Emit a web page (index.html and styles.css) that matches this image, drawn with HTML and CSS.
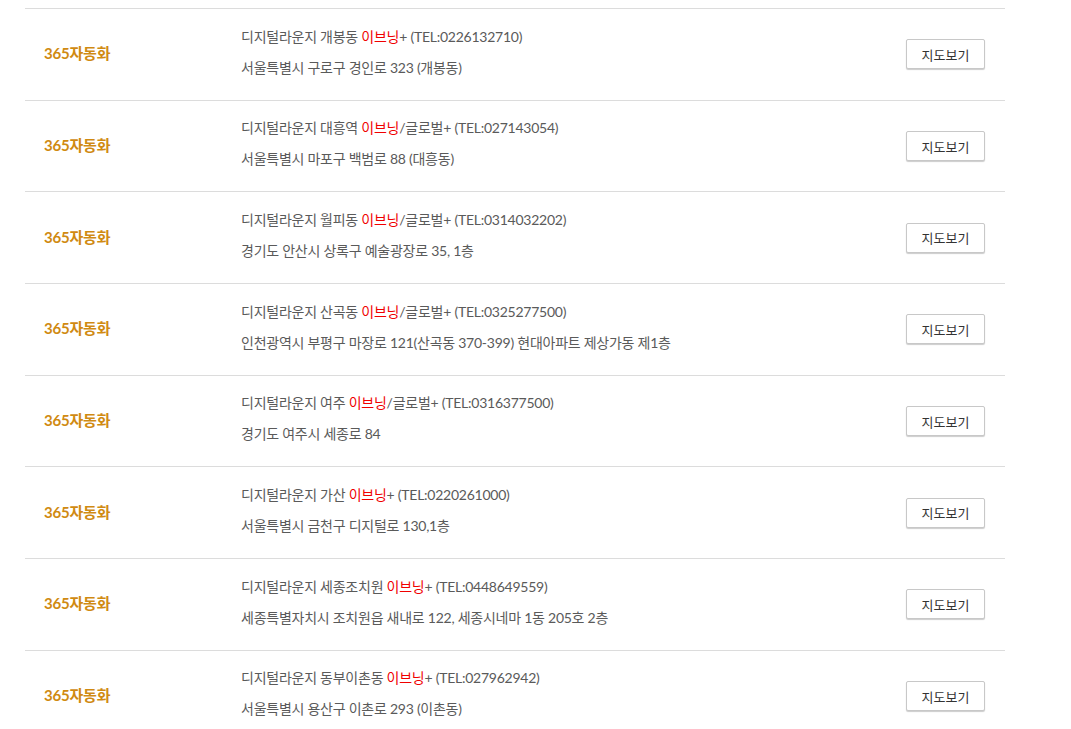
FILE: index.html
```html
<!DOCTYPE html>
<html lang="ko">
<head>
<meta charset="utf-8">
<link rel="stylesheet" href="styles.css">
</head>
<body>
<ul class="shop-list">
  <li class="shop">
    <div class="shop-name">365자동화</div>
    <div class="shop-info">
      <p class="line">디지털라운지 개봉동 <span class="brand">이브닝</span>+ (TEL:0226132710)</p>
      <p class="line">서울특별시 구로구 경인로 323 (개봉동)</p>
    </div>
    <button class="map-btn">지도보기</button>
  </li>
  <li class="shop">
    <div class="shop-name">365자동화</div>
    <div class="shop-info">
      <p class="line">디지털라운지 대흥역 <span class="brand">이브닝</span>/글로벌+ (TEL:027143054)</p>
      <p class="line">서울특별시 마포구 백범로 88 (대흥동)</p>
    </div>
    <button class="map-btn">지도보기</button>
  </li>
  <li class="shop">
    <div class="shop-name">365자동화</div>
    <div class="shop-info">
      <p class="line">디지털라운지 월피동 <span class="brand">이브닝</span>/글로벌+ (TEL:0314032202)</p>
      <p class="line">경기도 안산시 상록구 예술광장로 35, 1층</p>
    </div>
    <button class="map-btn">지도보기</button>
  </li>
  <li class="shop">
    <div class="shop-name">365자동화</div>
    <div class="shop-info">
      <p class="line">디지털라운지 산곡동 <span class="brand">이브닝</span>/글로벌+ (TEL:0325277500)</p>
      <p class="line">인천광역시 부평구 마장로 121(산곡동 370-399) 현대아파트 제상가동 제1층</p>
    </div>
    <button class="map-btn">지도보기</button>
  </li>
  <li class="shop">
    <div class="shop-name">365자동화</div>
    <div class="shop-info">
      <p class="line">디지털라운지 여주 <span class="brand">이브닝</span>/글로벌+ (TEL:0316377500)</p>
      <p class="line">경기도 여주시 세종로 84</p>
    </div>
    <button class="map-btn">지도보기</button>
  </li>
  <li class="shop">
    <div class="shop-name">365자동화</div>
    <div class="shop-info">
      <p class="line">디지털라운지 가산 <span class="brand">이브닝</span>+ (TEL:0220261000)</p>
      <p class="line">서울특별시 금천구 디지털로 130,1층</p>
    </div>
    <button class="map-btn">지도보기</button>
  </li>
  <li class="shop">
    <div class="shop-name">365자동화</div>
    <div class="shop-info">
      <p class="line">디지털라운지 세종조치원 <span class="brand">이브닝</span>+ (TEL:0448649559)</p>
      <p class="line">세종특별자치시 조치원읍 새내로 122, 세종시네마 1동 205호 2층</p>
    </div>
    <button class="map-btn">지도보기</button>
  </li>
  <li class="shop">
    <div class="shop-name">365자동화</div>
    <div class="shop-info">
      <p class="line">디지털라운지 동부이촌동 <span class="brand">이브닝</span>+ (TEL:027962942)</p>
      <p class="line">서울특별시 용산구 이촌로 293 (이촌동)</p>
    </div>
    <button class="map-btn">지도보기</button>
  </li>
</ul>
</body>
</html>
```

FILE: styles.css
```css
html, body {
  margin: 0;
  padding: 0;
  background: #fff;
}

body {
  font-family: Lato, "Noto Sans CJK KR", sans-serif;
  color: #555;
}

.shop-list {
  list-style: none;
  margin: 8px 0 0 25px;
  padding: 0;
  width: 980px;
}

.shop {
  display: flex;
  align-items: center;
  border-top: 1px solid #dcdcdc;
  padding: 0 20px 0 19px;
}

.shop-name {
  width: 197px;
  flex: none;
  font-size: 15px;
  font-weight: 700;
  color: #d08a12;
  letter-spacing: -0.2px;
  padding-bottom: 3px;
}

.shop-info {
  flex: 1;
  padding: 11.5px 0 17.2px;
}

.line {
  margin: 0;
  font-family: Lato, "Noto Sans CJK KR", sans-serif;
  font-size: 14px;
  letter-spacing: -0.25px;
  line-height: 31px;
  color: #5a5a5a;
  white-space: nowrap;
}

.brand {
  color: #f00000;
}

.map-btn {
  flex: none;
  width: 79px;
  height: 30px;
  padding: 0;
  background: #fff;
  border: 1px solid #c8c8c8;
  border-radius: 2px;
  box-shadow: 0 1px 1px rgba(0, 0, 0, 0.2);
  font-family: "Noto Sans CJK KR", sans-serif;
  font-size: 13px;
  color: #333;
  cursor: pointer;
}
```
